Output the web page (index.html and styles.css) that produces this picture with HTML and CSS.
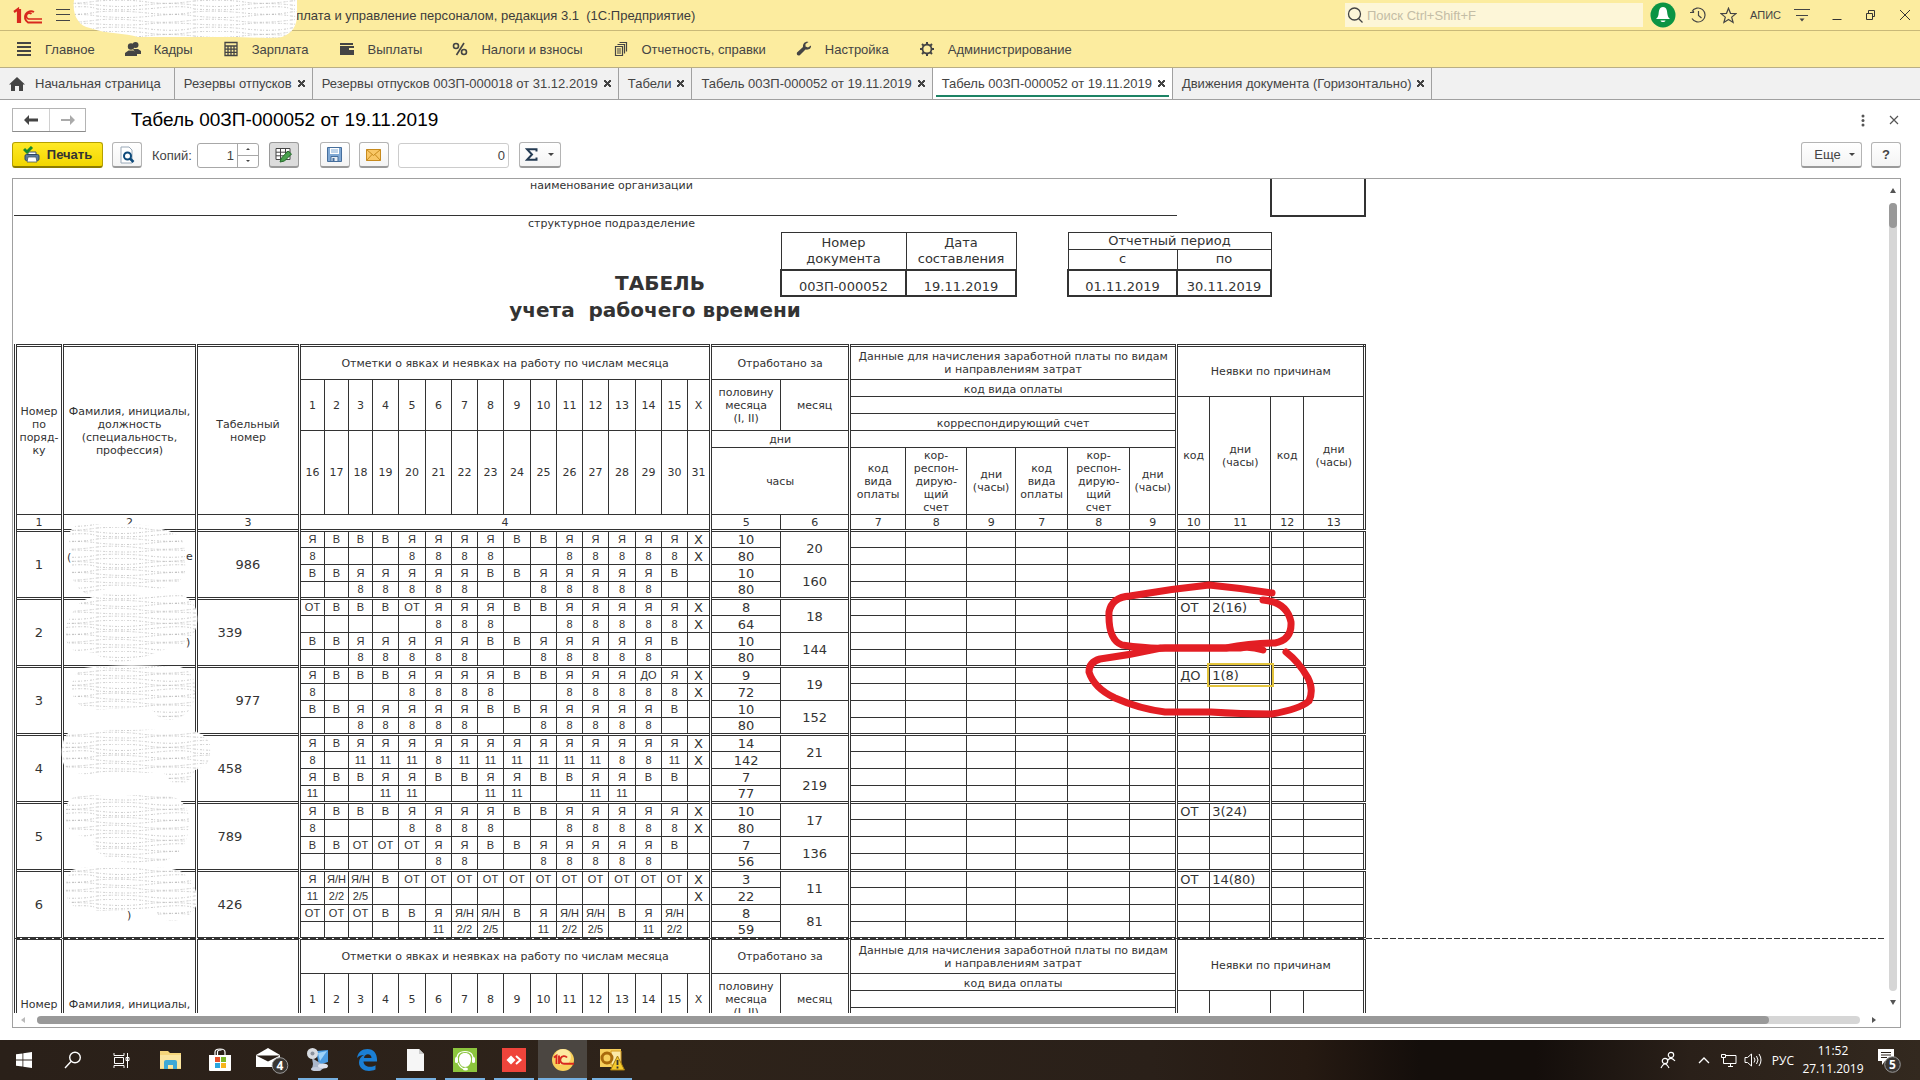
FILE: index.html
```html
<!DOCTYPE html>
<html lang="ru">
<head>
  <meta charset="UTF-8">
  <meta name="viewport" content="width=device-width, initial-scale=1.0">
  <title>Табель 00ЗП-000052 от 19.11.2019</title>
  <link rel="stylesheet" href="styles.css">
</head>
<body>
  <div class="app">
    <header class="titlebar">
      <svg class="logo" width="29" height="17" viewBox="0 0 29 17" fill="none" stroke="#d8281e" stroke-width="2">
        <path d="M1 5l4-3v14M7 2v14" stroke-width="2.2"/>
        <path d="M21 5a6 6 0 1 0-6 10.500h14"/>
        <path d="M18.500 7a3 3 0 1 0-3 5h13.500" stroke-width="1.600"/>
      </svg>
      <button class="icon-btn menu-btn" aria-label="Главное меню">
        <svg width="14" height="14" viewBox="0 0 14 14" stroke="#444" fill="none"><path d="M0 1.500h14M0 6.500h14M0 12.500h14"/></svg>
      </button>
      <span class="app-name">рплата и управление персоналом, редакция 3.1&nbsp; (1С:Предприятие)</span>
      <label class="search">
        <svg width="17" height="17" viewBox="0 0 17 17" fill="none" stroke="#444" stroke-width="1.300"><circle cx="7.500" cy="7" r="6"/><path d="M11.500 11.500l4 4"/></svg>
        <input type="text" placeholder="Поиск Ctrl+Shift+F" aria-label="Поиск">
      </label>
      <div class="title-tools">
        <button class="icon-btn" aria-label="Уведомления">
          <svg width="26" height="26" viewBox="0 0 26 26"><circle cx="13" cy="13" r="12.500" fill="#0b9444"/><path d="M13 5c4 0 4 4 4.500 7.500.300 2 1 3 2.500 4.500H6c1.500-1.500 2.200-2.500 2.500-4.500C9 9 9 5 13 5zM10.500 18.500h5c-.5 2-4.500 2-5 0z" fill="#fff"/></svg>
        </button>
        <button class="icon-btn" aria-label="История">
          <svg width="18" height="16" viewBox="0 0 18 16" fill="none" stroke="#444" stroke-width="1.200"><path d="M3 4.500A7 7 0 1 1 3 11.500M1 5.500h3.500V2M9.500 4v4.500l3 2.500"/></svg>
        </button>
        <button class="icon-btn" aria-label="Избранное">
          <svg width="17" height="17" viewBox="0 0 17 17" fill="none" stroke="#444" stroke-width="1.200"><path d="M8.500 1.200l2 5.100 5.500.300-4.300 3.500 1.400 5.400-4.600-3-4.600 3 1.400-5.400L1 6.600l5.500-.3z"/></svg>
        </button>
        <span class="user">АПИС</span>
        <button class="icon-btn" aria-label="Настройки окна">
          <svg width="16" height="14" viewBox="0 0 16 14"><path d="M0 1.500h16M2 7.500h12" stroke="#444"/><path d="M5.500 10.500h5L8 13.500z" fill="#444"/></svg>
        </button>
      </div>
      <div class="window-btns">
        <button class="icon-btn" aria-label="Свернуть"><svg width="12" height="12" viewBox="0 0 12 12" stroke="#333" fill="none"><path d="M1.500 10.500h9"/></svg></button>
        <button class="icon-btn" aria-label="Восстановить"><svg width="12" height="12" viewBox="0 0 12 12" stroke="#333" fill="none"><path d="M1.500 4.500h6v6h-6zM3.500 4.500v-3h6v6h-2"/></svg></button>
        <button class="icon-btn" aria-label="Закрыть"><svg width="12" height="12" viewBox="0 0 12 12" stroke="#333" fill="none"><path d="M1 1l10 10M11 1L1 11"/></svg></button>
      </div>
      <svg class="title-scribble" width="230" height="40" viewBox="70 0 230 40">
        <path class="scribble" d="M74 0C72 14 78 26 90 28c16 6 36 5 48 9h90c22 0 42 2 54 0 11-4 15-12 15-22V0z"/>
        <path class="scribble-ink" d="M74 0C72 14 78 26 90 28c16 6 36 5 48 9h90c22 0 42 2 54 0 11-4 15-12 15-22V0z"/>
      </svg>
    </header>

    <nav class="sections">
      <a href="#"><svg viewBox="0 0 16 16" stroke="#444" stroke-width="2"><path d="M1 2h14M1 6h14M1 10h14M1 14h14"/></svg>Главное</a>
      <a href="#"><svg viewBox="0 0 16 16" fill="#444"><circle cx="10.500" cy="4" r="3"/><path d="M8 8h5l3 2v3h-5z"/><circle cx="6" cy="5.500" r="3.200"/><path d="M0 15v-3l3.500-2.500h5L12 12v3z"/></svg>Кадры</a>
      <a href="#"><svg viewBox="0 0 16 16" fill="none" stroke="#444" stroke-width="1.300"><path d="M2 1.500h12v13H2zM2 5h12M2 8.200h12M2 11.300h12M5 5v9.500M8 5v9.500M11 5v9.500"/></svg>Зарплата</a>
      <a href="#"><svg viewBox="0 0 16 16" fill="#444"><path d="M1 2h13v2H1zM1 5h14v2h-5v2h5v5H1z"/></svg>Выплаты</a>
      <a href="#"><svg viewBox="0 0 16 16" fill="none" stroke="#444" stroke-width="1.600"><circle cx="4" cy="5" r="2.500"/><circle cx="12" cy="11" r="2.500"/><path d="M12 2L4.500 14"/></svg>Налоги и взносы</a>
      <a href="#"><svg viewBox="0 0 16 16" fill="none" stroke="#444" stroke-width="1.200"><path d="M6.500 1.500h7v9M4.500 3.500h7v9M2.500 5.500h7v9h-7zM4 8h4M4 10h4M4 12h4"/></svg>Отчетность, справки</a>
      <a href="#"><svg viewBox="0 0 16 16" fill="#444"><path d="M15 4.500l-3 2-2.500-1 0-2.500 3-2c-3-1-6 1.500-5.500 5L1 11.500c-1 2.500 1.500 4 3 2.500l5.500-5.500c3.500.7 6-1.500 5.500-4z"/></svg>Настройка</a>
      <a href="#"><svg viewBox="0 0 16 16" fill="none" stroke="#444"><circle cx="8" cy="8" r="4.500" stroke-width="1.800"/><path d="M8 1v3M8 12v3M1 8h3M12 8h3M3 3l2 2M11 11l2 2M13 3l-2 2M5 11l-2 2" stroke-width="2"/></svg>Администрирование</a>
    </nav>

    <nav class="tabs">
      <a class="tab home" href="#"><svg width="16" height="14" viewBox="0 0 16 14" fill="#444"><path d="M8 0l8 7.500h-2V14h-4V9H6v5H2V7.500H0z"/></svg>Начальная страница</a>
      <a class="tab" href="#">Резервы отпусков<i class="tab-close"></i></a>
      <a class="tab" href="#">Резервы отпусков 00ЗП-000018 от 31.12.2019<i class="tab-close"></i></a>
      <a class="tab" href="#">Табели<i class="tab-close"></i></a>
      <a class="tab" href="#">Табель 00ЗП-000052 от 19.11.2019<i class="tab-close"></i></a>
      <a class="tab active" href="#">Табель 00ЗП-000052 от 19.11.2019<i class="tab-close"></i></a>
      <a class="tab" href="#">Движения документа (Горизонтально)<i class="tab-close"></i></a>
    </nav>

    <main class="form">
      <div class="form-title">
        <div class="history">
          <button aria-label="Назад"><svg width="14" height="10" viewBox="0 0 14 10" fill="#444"><path d="M0 5l5-5v3.500h9v3H5V10z"/></svg></button>
          <button aria-label="Вперед"><svg width="14" height="10" viewBox="0 0 14 10" fill="#aaa"><path d="M14 5L9 0v4H0v2h9v4z"/></svg></button>
        </div>
        <h1>Табель 00ЗП-000052 от 19.11.2019</h1>
        <button class="icon-btn more-dots" aria-label="Действия"><svg width="4" height="13" viewBox="0 0 4 13" fill="#555"><circle cx="2" cy="2" r="1.500"/><circle cx="2" cy="6.500" r="1.500"/><circle cx="2" cy="11" r="1.500"/></svg></button>
        <button class="icon-btn" aria-label="Закрыть"><svg width="10" height="10" viewBox="0 0 10 10" stroke="#555" stroke-width="1.200"><path d="M1 1l8 8M9 1L1 9"/></svg></button>
      </div>

      <div class="toolbar">
        <button class="btn print">
          <svg width="17" height="17" viewBox="0 0 17 17"><path d="M5 6h8v4H5z" fill="#fff" stroke="#456"/><rect x="2" y="8.500" width="14" height="6" rx="1.500" fill="#5b7a9c" stroke="#2e4760"/><path d="M5 11h8l1 5H4z" fill="#fff" stroke="#456" stroke-width=".8"/><path d="M1 3l3 3 5-5" fill="none" stroke="#188a2e" stroke-width="3"/></svg>
          Печать
        </button>
        <button class="btn square" aria-label="Просмотр">
          <svg width="16" height="18" viewBox="0 0 16 18"><path d="M2 1h8l3 3v13H2z" fill="#fff" stroke="#9aa9b8"/><circle cx="8.500" cy="10" r="3.500" fill="#fff" stroke="#0e4a7a" stroke-width="2"/><path d="M11 12.500l3.500 3.500" stroke="#0e4a7a" stroke-width="2.500"/></svg>
        </button>
        <label class="copies-label" for="copies">Копий:</label>
        <div class="spinner">
          <input id="copies" type="text" value="1">
          <div class="spin-btns"><button aria-label="Больше"><i class="caret up"></i></button><button aria-label="Меньше"><i class="caret"></i></button></div>
        </div>
        <button class="btn square pressed" aria-label="Редактирование">
          <svg width="18" height="16" viewBox="0 0 18 16"><path d="M1 1.500h14v11H1zM1 5.200h14M1 8.800h14M5.500 1.500v11M10.500 1.500v11" fill="#fff" stroke="#444"/><path d="M5 15l1.500-4L13 4l3.500 3-7 7z" fill="#4aa04e" stroke="#256b2b"/></svg>
        </button>
        <button class="btn square save" aria-label="Сохранить">
          <svg width="15" height="15" viewBox="0 0 15 15"><path d="M.5.500h14v14H.5z" fill="#7fa8d4" stroke="#466e9c"/><path d="M3 1h9v6H3z" fill="#fff"/><path d="M4 3h7M4 5h7" stroke="#7fa8d4"/><path d="M4 9.500h7v5H4z" fill="#e8eef5" stroke="#466e9c"/><path d="M5.500 11h2v3h-2z" fill="#466e9c"/></svg>
        </button>
        <button class="btn square" aria-label="Отправить">
          <svg width="15" height="12" viewBox="0 0 15 12"><path d="M.5.500h14v11H.5z" fill="#f9c766" stroke="#c78a1d"/><path d="M.5.500l7 6 7-6M.5 11.500L6 5.500M14.500 11.500L9 5.500" fill="none" stroke="#c78a1d"/></svg>
        </button>
        <input class="sum" type="text" value="0" aria-label="Сумма">
        <button class="btn sigma" aria-label="Сумма выделенных ячеек">
          <svg width="13" height="13" viewBox="0 0 13 13" fill="none" stroke="#243b53" stroke-width="2"><path d="M11.500 3.500V1.200H2l5 5.300-5 5.300h9.500V9.500"/></svg><i class="caret"></i>
        </button>
        <button class="btn more">Еще<i class="caret"></i></button>
        <button class="btn square help">?</button>
      </div>

      <section class="frame">
        <div class="viewport">
          <div class="sheet">
            <div class="org-row">
              <div class="org">наименование организации</div>
              <div class="okpo"></div>
            </div>
            <div class="unit">структурное подразделение</div>
            <div class="doc-head">
              <h2>ТАБЕЛЬ</h2>
              <p class="subtitle">учета&nbsp; рабочего времени</p>
              <table class="doc-table number">
                <tr class="tall"><th>Номер<br>документа</th><th>Дата<br>составления</th></tr>
                <tr class="values"><td>00ЗП-000052</td><td>19.11.2019</td></tr>
              </table>
              <table class="doc-table period">
                <colgroup><col><col></colgroup>
                <tr class="short"><th colspan="2">Отчетный период</th></tr>
                <tr class="mid"><th>с</th><th>по</th></tr>
                <tr class="values"><td>01.11.2019</td><td>30.11.2019</td></tr>
              </table>
            </div>

            <table class="timesheet" id="page1">
              <colgroup>
                <col><col><col>
                <col><col><col><col><col><col><col><col><col><col><col><col><col><col><col><col>
                <col><col>
                <col><col><col><col><col><col>
                <col><col><col><col>
              </colgroup>
              <thead>
                <tr class="h34">
                  <th class="dbl" rowspan="6">Номер<br>по<br>поряд-<br>ку</th>
                  <th class="dbl" rowspan="6">Фамилия, инициалы,<br>должность<br>(специальность,<br>профессия)</th>
                  <th class="dbl" rowspan="6">Табельный<br>номер</th>
                  <th class="dbl" colspan="16">Отметки о явках и неявках на работу по числам месяца</th>
                  <th class="dbl" colspan="2">Отработано за</th>
                  <th class="dbl" colspan="6">Данные для начисления заработной платы по видам<br>и направлениям затрат</th>
                  <th class="dbl" colspan="4" rowspan="2">Неявки по причинам</th>
                </tr>
                <tr class="h17" id="days1">
                  <th class="dbl" rowspan="3">половину<br>месяца<br>(I, II)</th>
                  <th rowspan="3">месяц</th>
                  <th class="dbl low" colspan="6">код вида оплаты</th>
                </tr>
                <tr class="h17">
                  <th class="dbl" colspan="6"></th>
                  <th class="dbl" rowspan="4">код</th>
                  <th rowspan="4">дни<br>(часы)</th>
                  <th rowspan="4">код</th>
                  <th rowspan="4">дни<br>(часы)</th>
                </tr>
                <tr class="h17"><th class="dbl low" colspan="6">корреспондирующий счет</th></tr>
                <tr class="h17" id="days2">
                  <th class="dbl" colspan="2">дни</th>
                  <th class="dbl" colspan="6"></th>
                </tr>
                <tr class="h67">
                  <th class="dbl" colspan="2">часы</th>
                  <th class="dbl">код<br>вида<br>оплаты</th>
                  <th>кор-<br>респон-<br>дирую-<br>щий<br>счет</th>
                  <th>дни<br>(часы)</th>
                  <th>код<br>вида<br>оплаты</th>
                  <th>кор-<br>респон-<br>дирую-<br>щий<br>счет</th>
                  <th>дни<br>(часы)</th>
                </tr>
                <tr class="h16">
                  <th class="dbl">1</th><th class="dbl">2</th><th class="dbl">3</th>
                  <th class="dbl" colspan="16">4</th>
                  <th class="dbl">5</th><th>6</th>
                  <th class="dbl">7</th><th>8</th><th>9</th><th>7</th><th>8</th><th>9</th>
                  <th class="dbl">10</th><th>11</th><th>12</th><th>13</th>
                </tr>
              </thead>
              <tbody id="employees"></tbody>
            </table>
            <div class="page-break"></div>
            <div id="page2"></div>

            <svg class="marks" width="1876" height="834" viewBox="13 179 1876 834">
              <defs>
                <pattern id="ink" width="97" height="31" patternUnits="userSpaceOnUse">
                  <path d="M0 1q30-2 50 1t47-1M0 5q25 3 48 0t49 0M0 9q30 2 60-1t37 1M0 12q22-2 50 1t47-1M0 16q30 3 55 0t42 0M0 20q20-2 44 1t53-1M0 24q32 2 50 0t47 0M0 28q24-2 52 1t45-1" fill="none" stroke="#b4b4b4" stroke-width=".7" stroke-dasharray="2 1 1 2"/>
                </pattern>
              </defs>
              <g id="blobs">
                <path d="M70 532c4-8 14-10 22-8 24 2 38-2 58 2 14 4 28 6 32 14 5 12 4 24 3 32-2 8-10 14-22 16-14 3-28-3-44-1-14 2-24 4-32 7-8-4-14-10-15-20 1-14-5-28-2-42z"/>
                <path d="M81 602c14-8 34-10 52-8 16 4 22 2 32 0 14-3 30 4 32 20 2 12-4 22-10 28-14 6-26 8-40 14-14 6-32 8-44 2-8-4-12-8-22-5-12-2-18-14-15-26 3-10 7-16 15-25z"/>
                <path d="M84 668c30-4 66-3 96-1 14 4 16 16 15 28-2 16-12 24-26 25-8 0-12-4-17-10-20-2-40-1-60 0-14-2-20-12-20-22 0-10 4-16 12-20z"/>
                <path d="M68 733c36-5 76-3 114-3 18 0 30 8 29 22-1 12-8 16-16 18-4 8-8 15-15 15-8-1-12-5-16-12-26 0-46-1-66 0-14 3-26 1-34-8-4-10-3-24 4-32z"/>
                <path d="M70 799c14-6 32-3 50-4 18 1 44-2 58 4 12 8 12 20 10 32-1 16-12 26-26 31-20 3-42 2-58-6-8-4-12-10-10-18-16-1-26-6-28-16-1-10 0-18 4-23z"/>
                <path d="M72 870c18-6 40-2 60-4 18 2 36 0 50 6 12 8 17 22 14 34-4 10-14 15-26 15-8-1-12-6-15-11-26-1-46 2-74 0-14-5-16-16-15-26 1-6 2-10 6-14z"/>
              </g>
              <g class="leftovers">
                <text x="67" y="561">(</text><text x="186" y="560">е</text><text x="186" y="646">)</text><text x="127" y="919">)</text>
              </g>
              <rect x="1208" y="664" width="65" height="22" fill="none" stroke="#e3c43c" stroke-width="2"/>
              <g fill="none" stroke="#e31e24" stroke-width="7" stroke-linecap="round" stroke-linejoin="round">
                <path d="M1272 593Q1240 588 1209 585Q1170 589 1130 596Q1112 597 1109 612Q1108 640 1122 645Q1150 649 1165 648H1226Q1250 643 1275 643Q1292 640 1291 622Q1287 602 1263 600"/>
                <path d="M1263 650Q1250 646 1240 648H1161Q1130 655 1100 659Q1089 662 1089 672Q1094 688 1115 698Q1140 709 1165 712H1211Q1240 714 1272 714Q1300 709 1309 701Q1314 690 1308 678Q1299 662 1286 652"/>
              </g>
            </svg>
          </div>
        </div>
        <div class="scroll-v"><i class="arrow up"></i><div class="track"><div class="thumb"></div></div><i class="arrow down"></i></div>
        <div class="scroll-h"><i class="arrow left"></i><div class="track"><div class="thumb"></div></div><i class="arrow right"></i></div>
      </section>
    </main>

    <footer class="taskbar">
      <button class="task" aria-label="Пуск"><svg width="16" height="16" viewBox="0 0 16 16" fill="#fff"><path d="M0 2.300l6.500-.9v6.200H0zM7.300 1.300L16 0v7.600H7.300zM0 8.400h6.500v6.200L0 13.700zM7.300 8.400H16V16l-8.700-1.200z"/></svg></button>
      <button class="task" aria-label="Поиск"><svg width="18" height="18" viewBox="0 0 18 18" fill="none" stroke="#fff" stroke-width="1.400"><circle cx="11" cy="6.500" r="5.300"/><path d="M7 10.500L1 17"/></svg></button>
      <button class="task" aria-label="Представление задач"><svg width="17" height="17" viewBox="0 0 17 17" fill="none" stroke="#fff"><path d="M1 1v2.500h10V1M1.500 5.500h9v6h-9zM1 16v-2.500h10V16M14.500 1v15M13 5.500h3v3h-3z"/></svg></button>
      <button class="task" aria-label="Проводник"><svg width="22" height="20" viewBox="0 0 22 20"><path d="M0 1h8l2 2h11v16H0z" fill="#f5d67b"/><path d="M0 5h21v13H0z" fill="#fbe6a0"/><path d="M4 19v-7q0-2 2-2h9q2 0 2 2v7h-4v-4H8v4z" fill="#3fa9d6"/></svg></button>
      <button class="task" aria-label="Магазин"><svg width="24" height="24" viewBox="0 0 24 24"><path d="M7 7V4q0-3 5-3t5 3v3M9.500 7V4q0-2 4-2" fill="none" stroke="#fff" stroke-width="1.200"/><path d="M1 7h22v15q0 1-1 1H2q-1 0-1-1z" fill="#fff"/><path d="M7 9h5v5H7z" fill="#e8502a"/><path d="M13 9h5v5h-5z" fill="#7db928"/><path d="M7 15h5v5H7z" fill="#2aa6de"/><path d="M13 15h5v5h-5z" fill="#f7b51c"/></svg></button>
      <button class="task" aria-label="Почта"><svg class="mail" width="34" height="28" viewBox="0 0 34 28"><path d="M1 9l12-7 12 7v12H1z" fill="#fff"/><path d="M1 9.500h24l-12 6z" fill="#2a2019"/><circle cx="25" cy="19.500" r="7.800" fill="#3a3632" stroke="#999"/><text x="21.500" y="24" class="badge-text">4</text></svg></button>
      <button class="task open" aria-label="Удаленный рабочий стол"><svg width="24" height="24" viewBox="0 0 24 24"><path d="M10 3l12-1v12l-9 3z" fill="#4c9be0"/><path d="M12 5l9-2-7 10z" fill="#9ed2f8"/><path d="M6 10l8 5 5 4-5 4-8-2 1-5z" fill="#aab6ca"/><ellipse cx="17" cy="18" rx="5" ry="2.500" fill="#dfe3ee"/><ellipse cx="10" cy="21" rx="5" ry="2" fill="#c3cbdc"/><circle cx="6.500" cy="5.500" r="5.500" fill="#d8dce2"/><circle cx="6.500" cy="5.500" r="2" fill="#8a929e"/></svg></button>
      <button class="task" aria-label="Edge"><svg width="22" height="22" viewBox="0 0 22 22"><path d="M1 9C2 3 6 0 11.500 0 18 0 21.500 5 21 12.500H7.500c.2 5.500 7.500 6.500 12 3.700v4.300C12 24 3 21 3 13.500c0-3.500 2-6 5-7.500-3 0-5.500 1-7 3zM8 9h7.500C15.500 4 8.500 4 8 9z" fill="#1b7fd4"/></svg></button>
      <button class="task open" aria-label="Документ"><svg width="17" height="22" viewBox="0 0 17 22"><path d="M0 0h12l5 5v17H0z" fill="#f6f6f6"/><path d="M12 0v5h5" fill="#ccc"/></svg></button>
      <button class="task open" aria-label="Поддержка"><svg width="24" height="24" viewBox="0 0 24 24"><path d="M0 0h24v24H0z" fill="#8cc63e"/><path d="M12 5c4 0 6 2.500 6 6.500S15.500 19 12 19s-6-3.500-6-7.500S8 5 12 5z" fill="#fff"/><path d="M4 13Q3 3.500 12 3.500T20 13M5 15q2 4.500 6 6" fill="none" stroke="#fff" stroke-width="1.200"/><rect x="2" y="9" width="3" height="6" rx="1.500" fill="#fff"/><rect x="19" y="9" width="3" height="6" rx="1.500" fill="#fff"/><ellipse cx="12.500" cy="21" rx="2.500" ry="1.500" fill="#fff"/></svg></button>
      <button class="task open" aria-label="AnyDesk"><svg width="24" height="24" viewBox="0 0 24 24"><path d="M0 0h24v24H0z" fill="#ef443b"/><path d="M9 7.500l4.500 4.500L9 16.500 4.500 12z" fill="#fff"/><path d="M14 8l4.500 4-4.500 4" fill="none" stroke="#fff" stroke-width="2"/></svg></button>
      <button class="task open current" aria-label="1С:Предприятие"><svg width="24" height="24" viewBox="0 0 24 24"><circle cx="12" cy="12" r="11" fill="#f8cf5a"/><circle cx="12" cy="9" r="8" fill="#fde9a0"/><path d="M3 9.500l2.500-1.800V16M8 7.500V16M16 9.500a3.800 3.800 0 1 0-3 6.200h10" fill="none" stroke="#d8281e" stroke-width="1.900"/></svg></button>
      <button class="task open" aria-label="Outlook"><svg width="26" height="26" viewBox="0 0 26 26"><path d="M1 2h21v18H1z" fill="#f6cf5c"/><path d="M12 4h10v14H12z" fill="#fbe9a6" stroke="#d59b1e"/><circle cx="8" cy="11" r="5" fill="none" stroke="#a86a0c" stroke-width="3"/><path d="M18.500 9l7 14h-14z" fill="#f5c92d" stroke="#a67c10"/><path d="M18.500 13v5M18.500 19.500v2" stroke="#333" stroke-width="1.800"/></svg></button>

      <div class="tray">
        <svg class="people" width="16" height="18" viewBox="0 0 16 18" fill="none" stroke="#fff" stroke-width="1.200"><circle cx="11" cy="4" r="2.700"/><path d="M7.500 9.500q3.500-4.500 7.500.5"/><circle cx="5" cy="10" r="2.700"/><path d="M1 17q4-8 8 0"/></svg>
        <svg width="12" height="8" viewBox="0 0 12 8" fill="none" stroke="#fff" stroke-width="1.300"><path d="M1 7l5-5 5 5"/></svg>
        <svg class="net" width="17" height="15" viewBox="0 0 17 15" fill="none" stroke="#fff"><path d="M5 2.500h11v8H5M8 13.500h5M10.500 10.500v3M1.500 1.500h4v3h-4zM3.500 4.500v6H5"/></svg>
        <svg class="sound" width="18" height="14" viewBox="0 0 18 14" fill="none" stroke="#fff"><path d="M1 4.500h2.500L7.500 1v12L3.500 9.500H1zM10 4.500q2 2.500 0 5M12.500 3q3 4 0 8M15 1q4 6 0 12"/></svg>
        <span class="lang">РУС</span>
        <time class="clock">11:52<br>27.11.2019</time>
        <svg class="notify" width="24" height="28" viewBox="0 0 24 28"><path d="M1 3h16v12h-9l-3 4v-4H1z" fill="#fff"/><path d="M4 6.500h10M4 9h10M4 11.500h6" stroke="#2a2019"/><circle cx="15.500" cy="18.500" r="7.800" fill="#3a3632" stroke="#999"/><text x="12" y="23" class="badge-text">5</text></svg>
      </div>
    </footer>
  </div>
  <script src="script.js"></script>
</body>
</html>
```

FILE: styles.css
```css
* {
  box-sizing: border-box;
}
body {
  margin: 0;
  font-family: "Liberation Sans", Arial, sans-serif;
  font-size: 13px;
  color: #444;
  background: #fff;
}
.app {
  display: flex;
  flex-direction: column;
  height: 100vh;
  overflow: hidden;
}
a {
  color: inherit;
  text-decoration: none;
}
button,
input {
  font-family: inherit;
  font-size: 13px;
  color: inherit;
}
.icon-btn {
  display: flex;
  padding: 0;
  border: none;
  background: none;
}

/* title bar */
.titlebar {
  position: relative;
  display: flex;
  align-items: center;
  height: 31px;
  padding: 0 9px 0 13px;
  background: #fcec9f;
  border-bottom: 1px solid #c9b978;
}
.menu-btn {
  margin-left: 14px;
}
.app-name {
  margin-left: 219px;
  color: #3c3c3c;
  white-space: pre;
}
.title-scribble {
  position: absolute;
  left: 70px;
  top: 0;
  z-index: 2;
}
.search {
  display: flex;
  align-items: center;
  gap: 3px;
  width: 298px;
  height: 24px;
  margin-left: auto;
  padding-left: 2px;
  background: #fdf6d8;
}
.search input {
  flex: 1;
  min-width: 0;
  padding: 0;
  border: none;
  background: none;
  outline: none;
}
.search input::placeholder {
  color: #c4bda6;
}
.title-tools {
  display: flex;
  align-items: center;
  gap: 13px;
  margin-left: 7px;
}
.user {
  font-size: 11px;
}
.window-btns {
  display: flex;
  gap: 22px;
  margin-left: 21px;
}

/* sections */
.sections {
  display: flex;
  align-items: center;
  gap: 30px;
  height: 37px;
  padding-left: 16px;
  background: #fcec9f;
  border-bottom: 1px solid #b9ae84;
}
.sections a {
  display: flex;
  align-items: center;
  gap: 13px;
  white-space: nowrap;
}
.sections svg {
  width: 16px;
  height: 16px;
}

/* tabs */
.tabs {
  display: flex;
  height: 32px;
  background: #f1f1f1;
  border-bottom: 1px solid #a0a0a0;
}
.tab {
  position: relative;
  display: flex;
  align-items: center;
  padding: 0 7px 0 9px;
  border-right: 1px solid #a0a0a0;
  white-space: nowrap;
}
.tab.home {
  gap: 10px;
  padding-right: 13px;
}
.tab.active {
  background: #fff;
}
.tab.active::after {
  content: "";
  position: absolute;
  left: 3px;
  right: 3px;
  bottom: 2px;
  height: 2px;
  background: #1d8365;
}
.tab-close {
  width: 7px;
  height: 7px;
  margin-left: 6px;
  background:
    linear-gradient(45deg, transparent 42%, #444 42%, #444 58%, transparent 58%),
    linear-gradient(-45deg, transparent 42%, #444 42%, #444 58%, transparent 58%);
}

/* form */
.form {
  display: flex;
  flex: 1;
  flex-direction: column;
  min-height: 0;
  padding: 8px 19px 12px 12px;
}
.form-title {
  display: flex;
  align-items: center;
  height: 24px;
  padding-right: 2px;
}
.history {
  display: flex;
  height: 24px;
  border: 1px solid #b4b4b4;
  border-bottom-color: #8c8c8c;
}
.history button {
  display: flex;
  align-items: center;
  justify-content: center;
  width: 36px;
  padding: 0;
  border: none;
  background: #fff;
}
.history button + button {
  border-left: 1px solid #d0d0d0;
}
.form-title h1 {
  margin: 0 auto 0 45px;
  font-size: 19px;
  font-weight: normal;
  color: #000;
}
.more-dots {
  margin-right: 24px;
}
.toolbar {
  display: flex;
  align-items: center;
  height: 26px;
  margin: 10px 0;
}
.btn {
  display: flex;
  align-items: center;
  justify-content: center;
  height: 26px;
  padding: 0;
  border: 1px solid #b4b4b4;
  border-bottom: 2px solid #9a9a9a;
  border-radius: 3px;
  background: linear-gradient(#fff, #f4f4f4);
}
.square {
  width: 30px;
}
.print {
  gap: 7px;
  width: 91px;
  margin-right: 9px;
  border-color: #b5a000;
  border-bottom-color: #8c7b00;
  background: linear-gradient(#ffe926, #f2d600);
  font-weight: bold;
  color: #333;
}
.copies-label {
  margin: 0 5px 0 10px;
}
.spinner {
  display: flex;
  width: 62px;
  height: 25px;
  border: 1px solid #a8a8a8;
  border-radius: 3px;
}
.spinner input {
  flex: 1;
  min-width: 0;
  padding: 0 3px;
  border: none;
  background: none;
  text-align: right;
}
.spin-btns {
  display: flex;
  flex-direction: column;
  width: 21px;
  border-left: 1px solid #a8a8a8;
}
.spin-btns button {
  display: flex;
  flex: 1;
  align-items: center;
  justify-content: center;
  padding: 0;
  border: none;
  background: none;
}
.spin-btns button + button {
  border-top: 1px solid #a8a8a8;
}
.caret {
  border: 3px solid transparent;
  border-top-color: #444;
  border-bottom: none;
}
.spin-btns .caret {
  border-width: 2px;
  border-bottom: none;
}
.spin-btns .caret.up {
  border: 2px solid transparent;
  border-top: none;
  border-bottom-color: #444;
}
.pressed {
  margin: 0 21px 0 10px;
  border-color: #9a9a9a;
  background: #dcdcdc;
}
.save {
  margin-right: 9px;
}
.sum {
  width: 111px;
  height: 25px;
  margin: 0 10px 0 9px;
  padding: 0 3px;
  border: 1px solid #ccc;
  border-radius: 3px;
  text-align: right;
}
.sigma {
  gap: 10px;
  width: 42px;
}
.more {
  gap: 8px;
  width: 61px;
  margin: 0 9px 0 auto;
}
.more .caret {
  margin-right: -6px;
}
.help {
  font-weight: bold;
}

/* spreadsheet */
.frame {
  display: grid;
  flex: 1;
  grid-template-columns: 1fr 13px;
  grid-template-rows: 1fr 14px;
  min-height: 0;
  border: 1px solid #a0a0a0;
}
.viewport {
  min-width: 0;
  overflow: auto;
  scrollbar-width: none;
}
.sheet {
  position: relative;
  padding-left: 1px;
  font-family: "DejaVu Sans", Verdana, sans-serif;
  color: #333;
}
.org-row {
  display: flex;
  justify-content: space-between;
  width: 1352px;
  height: 38px;
}
.org {
  width: 1163px;
  height: 37px;
  padding-left: 32px;
  border-bottom: 1px solid #333;
  font-size: 11px;
  line-height: 13px;
  text-align: center;
}
.okpo {
  width: 96px;
  border: 2px solid #333;
  border-top: none;
}
.unit {
  width: 1163px;
  height: 15px;
  padding-left: 32px;
  font-size: 11px;
  line-height: 13px;
  text-align: center;
}
.doc-head {
  display: grid;
  grid-template-columns: 766px 237px 50px 205px 24px;
  grid-template-rows: 65px 27px;
  width: 1282px;
  margin-bottom: 20px;
}
.doc-head h2,
.subtitle {
  grid-column: 1 / -1;
  margin: 0;
  font-size: 20px;
  font-weight: bold;
  line-height: 27px;
  text-align: center;
}
.doc-head h2 {
  grid-row: 1;
  align-self: end;
  padding-left: 10px;
}
.subtitle {
  grid-row: 2;
}
.doc-table {
  grid-row: 1;
  align-self: start;
  border-collapse: collapse;
  table-layout: fixed;
  width: 100%;
  font-size: 13px;
}
.doc-table.number {
  grid-column: 2;
}
.doc-table.period {
  grid-column: 4;
}
.doc-table th {
  padding: 0;
  border: 1px solid #333;
  font-weight: normal;
  line-height: 16px;
}
.doc-table td {
  padding: 0;
  border: 2px solid #333;
  line-height: 16px;
  text-align: center;
  vertical-align: bottom;
}
.number th:first-child {
  width: 125px;
}
.period col:first-child {
  width: 109px;
}
.doc-table .tall { height: 37px; }
.doc-table .short { height: 17px; }
.doc-table .mid { height: 20px; }
.doc-table .values { height: 26px; }

.timesheet {
  width: 1352px;
  border-collapse: collapse;
  table-layout: fixed;
  border: 3px double #333;
  font-size: 11px;
  line-height: 13px;
}
.timesheet th,
.timesheet td {
  padding: 0;
  border: 1px solid #333;
  font-weight: normal;
  text-align: center;
  white-space: nowrap;
}
.timesheet .dbl {
  border-left: 3px double #333;
}
.timesheet .low {
  vertical-align: bottom;
}
.timesheet tbody {
  border-top: 3px double #333;
}
.timesheet col { width: 26px; }
.timesheet col:nth-child(1) { width: 47px; }
.timesheet col:nth-child(2) { width: 134px; }
.timesheet col:nth-child(3) { width: 103px; }
.timesheet col:nth-child(4) { width: 25px; }
.timesheet col:nth-child(5),
.timesheet col:nth-child(6) { width: 24px; }
.timesheet col:nth-child(8),
.timesheet col:nth-child(12),
.timesheet col:nth-child(16) { width: 27px; }
.timesheet col:nth-child(19) { width: 23px; }
.timesheet col:nth-child(20) { width: 70px; }
.timesheet col:nth-child(21) { width: 69px; }
.timesheet col:nth-child(22) { width: 56px; }
.timesheet col:nth-child(23) { width: 61px; }
.timesheet col:nth-child(24) { width: 49px; }
.timesheet col:nth-child(25) { width: 52px; }
.timesheet col:nth-child(26) { width: 62px; }
.timesheet col:nth-child(27) { width: 47px; }
.timesheet col:nth-child(28),
.timesheet col:nth-child(30) { width: 33px; }
.timesheet col:nth-child(29),
.timesheet col:nth-child(31) { width: 61px; }
.h34 { height: 34px; }
.h17 { height: 17px; }
.h67 { height: 67px; }
.h16 { height: 16px; }
.timesheet tbody tr {
  height: 17px;
}
.timesheet .first td {
  border-top: 3px double #333;
}
.timesheet .num,
.timesheet .total {
  font-size: 13px;
}
.timesheet .shifted {
  padding-right: 36px;
}
.timesheet .day {
  font-family: "Liberation Sans", Arial, sans-serif;
  font-size: 11px;
}
.timesheet .reason {
  padding-left: 2px;
  font-size: 13px;
  text-align: left;
}
.timesheet.next {
  border-top: none;
}
.page-break {
  position: relative;
  height: 1px;
  margin: -2px 3px 0 0;
  background: repeating-linear-gradient(90deg, #333 0 6px, #fff 6px 8px);
}
.marks {
  position: absolute;
  left: 0;
  top: 0;
}
#blobs path,
.scribble {
  fill: #fff;
}
#blobs .ink,
.scribble-ink {
  fill: url(#ink);
}
.leftovers {
  font-size: 11px;
  fill: #333;
}

/* scroll bars */
.scroll-v {
  display: flex;
  flex-direction: column;
  align-items: center;
  padding: 9px 1px 8px 0;
}
.scroll-v .track {
  flex: 1;
  width: 8px;
  margin: 10px 0 9px;
  border-radius: 4px;
  background: #d6d6d6;
}
.scroll-v .thumb {
  width: 8px;
  height: 25px;
  border-radius: 4px;
  background: #999;
}
.scroll-h {
  display: flex;
  align-items: center;
  padding: 0 11px 0 8px;
}
.scroll-h .track {
  flex: 1;
  height: 8px;
  margin: 0 12px;
  border-radius: 4px;
  background: #d6d6d6;
}
.scroll-h .thumb {
  width: 95%;
  height: 8px;
  border-radius: 4px;
  background: #999;
}
.arrow {
  border: 3px solid transparent;
}
.arrow.up {
  border-top: none;
  border-bottom: 5px solid #555;
}
.arrow.down {
  border-bottom: none;
  border-top: 5px solid #555;
}
.arrow.left {
  border-left: none;
  border-right: 4px solid #bbb;
}
.arrow.right {
  border-right: none;
  border-left: 4px solid #555;
}

/* task bar */
.taskbar {
  display: flex;
  height: 40px;
  background: linear-gradient(90deg, #2a2019 0, #2e231a 34%, #2a2019 60%, #261a12 68%, #140e0b 74%, #140e0b 80%, #2a2019 88%, #33291f 100%);
  color: #fff;
  font-family: "Open Sans", "Noto Sans", sans-serif;
  font-size: 12px;
}
.task {
  display: flex;
  align-items: center;
  justify-content: center;
  width: 49px;
  padding: 0;
  border: none;
  background: none;
}
.task:first-child {
  width: 48px;
}
.mail {
  margin-left: 6px;
}
.task.open {
  background: linear-gradient(#76b0e0, #76b0e0) center bottom / 40px 2px no-repeat;
}
.task.current {
  background: linear-gradient(#76b0e0, #76b0e0) center bottom / 100% 2px no-repeat, #4b4641;
}
.badge-text {
  font-size: 12px;
  font-weight: bold;
  fill: #fff;
}
.tray {
  display: flex;
  align-items: center;
  margin-left: auto;
  padding-right: 19px;
}
.people {
  margin-right: 22px;
}
.net {
  margin: 0 7px 0 10px;
}
.lang {
  margin-left: 10px;
}
.clock {
  width: 62px;
  margin: 0 13px 0 8px;
  line-height: 18px;
  text-align: center;
}
```

FILE: script.js
```js
// day rows: "-" is an empty cell
const employees = [
  {
    id: "986",
    days: [
      "Я В В В Я Я Я Я В В Я Я Я Я Я Х",
      "8 - - - 8 8 8 8 - - 8 8 8 8 8 Х",
      "В В Я Я Я Я Я В В Я Я Я Я Я В -",
      "- - 8 8 8 8 8 - - 8 8 8 8 8 - -"
    ],
    half: [10, 80, 10, 80], month: [20, 160]
  },
  {
    id: "339", shifted: true,
    days: [
      "ОТ В В В ОТ Я Я Я В В Я Я Я Я Я Х",
      "- - - - - 8 8 8 - - 8 8 8 8 8 Х",
      "В В Я Я Я Я Я В В Я Я Я Я Я В -",
      "- - 8 8 8 8 8 - - 8 8 8 8 8 - -"
    ],
    half: [8, 64, 10, 80], month: [18, 144], reason: ["ОТ", "2(16)"]
  },
  {
    id: "977",
    days: [
      "Я В В В Я Я Я Я В В Я Я Я ДО Я Х",
      "8 - - - 8 8 8 8 - - 8 8 8 8 8 Х",
      "В В Я Я Я Я Я В В Я Я Я Я Я В -",
      "- - 8 8 8 8 8 - - 8 8 8 8 8 - -"
    ],
    half: [9, 72, 10, 80], month: [19, 152], reason: ["ДО", "1(8)"]
  },
  {
    id: "458", shifted: true,
    days: [
      "Я В Я Я Я Я Я Я Я Я Я Я Я Я Я Х",
      "8 - 11 11 11 8 11 11 11 11 11 11 8 8 11 Х",
      "Я В В Я Я В В Я Я В В Я Я В В -",
      "11 - - 11 11 - - 11 11 - - 11 11 - - -"
    ],
    half: [14, 142, 7, 77], month: [21, 219]
  },
  {
    id: "789", shifted: true,
    days: [
      "Я В В В Я Я Я Я В В Я Я Я Я Я Х",
      "8 - - - 8 8 8 8 - - 8 8 8 8 8 Х",
      "В В ОТ ОТ ОТ Я Я В В Я Я Я Я Я В -",
      "- - - - - 8 8 - - 8 8 8 8 8 - -"
    ],
    half: [10, 80, 7, 56], month: [17, 136], reason: ["ОТ", "3(24)"]
  },
  {
    id: "426", shifted: true,
    days: [
      "Я Я/Н Я/Н В ОТ ОТ ОТ ОТ ОТ ОТ ОТ ОТ ОТ ОТ ОТ Х",
      "11 2/2 2/5 - - - - - - - - - - - - Х",
      "ОТ ОТ ОТ В В Я Я/Н Я/Н В Я Я/Н Я/Н В Я Я/Н -",
      "- - - - - 11 2/2 2/5 - 11 2/2 2/5 - 11 2/2 -"
    ],
    half: [3, 22, 8, 59], month: [11, 81], reason: ["ОТ", "14(80)"]
  }
];

// header days
const firstHalf = [];
const secondHalf = [];
for (let d = 1; d <= 15; d++) {
  firstHalf.push(d);
  secondHalf.push(d + 15);
}
firstHalf.push("Х");
secondHalf.push(31);

function dayHeaders(days, rowspan) {
  return days.map((d, i) => `<th${i === 0 ? ' class="dbl"' : ""} rowspan="${rowspan}">${d}</th>`).join("");
}
document.getElementById("days1").insertAdjacentHTML("afterbegin", dayHeaders(firstHalf, 3));
document.getElementById("days2").insertAdjacentHTML("afterbegin", dayHeaders(secondHalf, 2));

let html = "";
employees.forEach((e, n) => {
  e.days.forEach((line, r) => {
    html += `<tr${r === 0 ? ' class="first"' : ""}>`;
    if (r === 0) {
      html += `<td class="dbl num" rowspan="4">${n + 1}</td><td class="dbl" rowspan="4"></td>`;
      html += `<td class="dbl num${e.shifted ? " shifted" : ""}" rowspan="4">${e.id}</td>`;
    }
    line.split(" ").forEach((v, i) => {
      const cls = v === "Х" ? "total" : "day";
      html += `<td class="${cls}${i === 0 ? " dbl" : ""}">${v === "-" ? "" : v}</td>`;
    });
    html += `<td class="dbl total">${e.half[r]}</td>`;
    if (r % 2 === 0) html += `<td class="total" rowspan="2">${e.month[r / 2]}</td>`;
    html += '<td class="dbl"></td>' + "<td></td>".repeat(5);
    const reason = r === 0 && e.reason ? e.reason : ["", ""];
    html += `<td class="dbl reason">${reason[0]}</td><td class="reason">${reason[1]}</td>`;
    html += '<td class="dbl"></td><td></td></tr>';
  });
});
document.getElementById("employees").innerHTML = html;

// the heading repeats on the next printed page
const next = document.getElementById("page1").cloneNode(true);
next.querySelector("tbody").remove();
next.querySelectorAll("[id]").forEach(el => el.removeAttribute("id"));
next.removeAttribute("id");
next.classList.add("next");
document.getElementById("page2").replaceWith(next);

// pen texture over each erased name
document.querySelectorAll("#blobs path").forEach(p => {
  const ink = p.cloneNode();
  ink.setAttribute("class", "ink");
  p.after(ink);
});
```
